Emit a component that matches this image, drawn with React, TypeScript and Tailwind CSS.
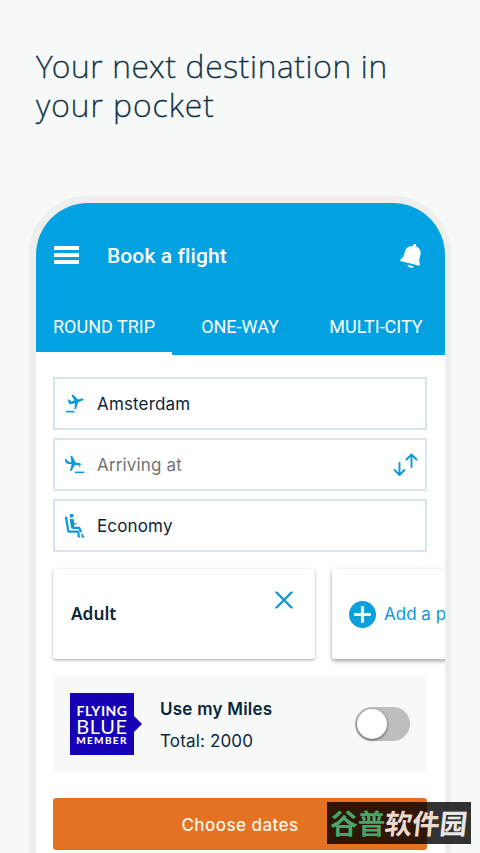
import React from "react";

const INTER = "font-['Inter','Liberation_Sans',sans-serif]";
const ROBOTO = "font-['Roboto','Liberation_Sans',sans-serif]";

function Takeoff() {
  return (
    <svg width="22" height="22" viewBox="0 0 22 22" className="shrink-0" fill="#0d98d8">
      <path d="M2 17.8h8.4v1.6H2z" />
      <path d="M3.6 6.4 5 6.5 7.4 8.5 10.4 7.6 7.3 2.3 9.1 1.6 14 6.6 17.8 5.6C19.8 5.2 20.2 6.8 18.7 7.6L14.2 9.2 12 16 10.4 16.3 11 10.2 5.8 11.2 4.9 10.3Z" />
    </svg>
  );
}

function Landing() {
  return (
    <svg width="22" height="22" viewBox="0 0 22 22" className="shrink-0" fill="#0d98d8">
      <path d="M11 17.6h9.3v1.6H11z" />
      <path d="M1 4.8 2.4 5.1 4.1 7.5 7.4 8 6.4 1.8 8.2 2 11.6 8.6 15.3 9.1C17.8 9.5 17.5 11.3 15.6 11.4L11 11 7.4 17 5.8 16.5 7.9 10.4 2.5 9.4 1.5 8.2Z" />
      <path d="M15 11.5 16.6 12.4 15 13Z" />
    </svg>
  );
}

function Seat() {
  return (
    <svg width="22" height="25" viewBox="0 0 22 25" className="shrink-0" fill="none" stroke="#0d98d8">
      <circle cx="7.6" cy="2.8" r="2" fill="#0d98d8" stroke="none" />
      <path d="M1.9 3.8 4.4 18.6H14.2L15 24.4" strokeWidth="2.2" strokeLinejoin="round" />
      <path d="M8.5 14.9H15.2L17.2 19" strokeWidth="2.2" strokeLinejoin="round" />
      <path d="M5.6 6.6Q7.6 5 9.9 6.6L10.4 15.4H7.3z" fill="#0d98d8" stroke="none" />
      <path d="M9.6 10.7h2.8" strokeWidth="1.4" />
      <path d="M17.6 19.5 20.8 24.4H17.4z" fill="#0d98d8" stroke="none" />
    </svg>
  );
}

function Field({ icon, children }: { icon: React.ReactNode; children: React.ReactNode }) {
  return (
    <div className="flex h-[53px] items-center border-2 border-[#d5e5eb] bg-white pl-[9px] pr-[7px]">
      {icon}
      {children}
    </div>
  );
}

export default function App() {
  return (
    <div className="flex h-[853px] w-[480px] flex-col overflow-hidden bg-[#f7f9f9] text-[#0b2638]">
      <h1 className="h-[196px] shrink-0 whitespace-nowrap pl-[36px] pt-[46px] font-['Noto_Sans','Open_Sans',sans-serif] text-[32px] font-extralight leading-[39px] text-[#0b2f43] [-webkit-text-stroke:0.45px_#0b2f43]">
        <span className="block tracking-[0.7px]">Your next destination in</span>
        <span className="block tracking-[1px]">your pocket</span>
      </h1>

      <div className="relative ml-[29px] h-[657px] w-[422px] shrink-0 rounded-t-[58px] bg-[#eeeeed] pl-[7px] pr-[6.5px] pt-[7px]">
        <div className="h-full overflow-hidden rounded-t-[52px] bg-white">
          <header className={`flex h-[152px] flex-col bg-[#02a1e2] text-white ${ROBOTO}`}>
            <div className="flex h-[105px] items-center pl-[18px] pr-[21px]">
              <div className="mb-px flex w-[25px] flex-col gap-[3px]">
                <i className="block h-[4px] bg-white" />
                <i className="block h-[4px] bg-white" />
                <i className="block h-[4px] bg-white" />
              </div>
              <span className="ml-[28px] flex-1 text-[21px] font-medium leading-6 tracking-[0.1px]">Book a flight</span>
              <svg width="24" height="26" viewBox="0 0 24 26" fill="#fff" className="mr-px">
                <path d="M16.1 1C14.9.7 14.3 1.4 14 2.7C9.9 2.9 6.7 5 5.7 9C4.8 12.6 4.5 14.4 1.8 16.2C1.2 16.7 1 17.7 1.2 18L20.3 22.7C21 22.2 21.1 21 20.7 20.4C19.8 17.8 20.6 15 21.4 11.7C22.3 7.8 20.3 4.7 17 3.3C17.2 2.3 16.9 1.3 16.1 1Z" />
                <path d="M8.5 21.8 15 23.4C14.1 25.5 9.1 25 8.5 21.8Z" />
              </svg>
            </div>
            <nav className="flex flex-1 text-[18px] leading-[38px]">
              <div className="flex h-[47px] w-[136px] justify-center border-b-[3px] border-white">ROUND TRIP</div>
              <div className="flex w-[136px] justify-center">ONE-WAY</div>
              <div className="flex w-[136px] justify-center">MULTI-CITY</div>
            </nav>
          </header>

          <main className={`flex w-[409px] flex-col pl-[17px] pt-[22px] ${INTER}`}>
            <div className="flex w-[374px] flex-col gap-[8px] text-[17px] tracking-[0.15px]">
              <Field icon={<Takeoff />}>
                <span className="ml-[11px] pt-[2px]">Amsterdam</span>
              </Field>
              <Field icon={<Landing />}>
                <span className="ml-[11px] flex-1 pt-[2px] text-[#707273]">Arriving at</span>
                <svg width="25" height="24" viewBox="0 0 25 24" fill="none" stroke="#0d98d8" strokeWidth="1.9" strokeLinecap="round" strokeLinejoin="round">
                  <path d="M6.5 10v12M1.5 17l5 5 5-5M18.5 14V1.5M13.5 6.5l5-5 5 5" />
                </svg>
              </Field>
              <Field icon={<Seat />}>
                <span className="ml-[11px] pt-[2px]">Economy</span>
              </Field>
            </div>

            <div className="mt-[17px] flex gap-[17px]">
              <section className="flex h-[90px] w-[262px] shrink-0 items-center rounded-[3px] bg-white pl-[18px] pr-[21px] shadow-[0_1px_3px_rgba(0,0,0,0.35)]">
                <strong className="flex-1 font-['Noto_Sans',sans-serif] text-[17.3px] font-semibold">Adult</strong>
                <svg className="mb-[28px]" width="20" height="20" viewBox="0 0 20 20" stroke="#0d98d8" strokeWidth="2.4" strokeLinecap="round">
                  <path d="m2.5 2.5 15 15M17.5 2.5l-15 15" />
                </svg>
              </section>
              <section className="flex h-[90px] w-[200px] shrink-0 items-center whitespace-nowrap rounded-[3px] bg-white pl-[17px] text-[#0d98d8] shadow-[0_2px_4px_rgba(0,0,0,0.38)]">
                <svg width="27" height="27" viewBox="0 0 26 26">
                  <circle cx="13" cy="13" r="13" fill="#0d9edc" />
                  <path d="M13 5v16M5 13h16" stroke="#fff" strokeWidth="3" />
                </svg>
                <span className="ml-[8px] pt-px text-[17px]">Add a passenger</span>
              </section>
            </div>

            <section className="mt-[17px] flex h-[97px] w-[374px] items-center bg-[#f7f9f9] pb-px pl-[17px] pr-[17px]">
              <div className="flex items-center">
                <div className="flex h-[62px] w-[64px] flex-col items-center bg-[#1500b5] pt-[10px] font-['Lato',sans-serif] text-white">
                  <span className="text-[14px] font-bold leading-[15px] tracking-[0.5px]">FLYING</span>
                  <span className="text-[20px] leading-[16px] tracking-[0.7px]">BLUE</span>
                  <span className="text-[10px] font-black leading-[12px] tracking-[1.3px]">MEMBER</span>
                </div>
                <svg width="8" height="16" viewBox="0 0 8 16" fill="#1500b5">
                  <path d="M0 0 8 8 0 16Z" />
                </svg>
              </div>
              <div className="ml-[18px] flex flex-1 flex-col pt-px text-[17px] leading-[32px]">
                <strong className="font-semibold tracking-[0.25px]">Use my Miles</strong>
                <span className="tracking-[0.15px]">Total: 2000</span>
              </div>
              <div className="flex h-[34px] w-[55px] items-center rounded-full bg-[#bcbdbd] pl-[1.5px]">
                <div className="size-[30px] rounded-full bg-white shadow-[0_1px_3px_rgba(0,0,0,0.6)]" />
              </div>
            </section>

            <button className="mt-[25px] h-[52px] w-[374px] rounded-[3px] bg-[#e37222] pt-[3px] text-[17px] font-medium tracking-[0.45px] text-[#fff5e8]">
              Choose dates
            </button>
          </main>
        </div>

        <div className="absolute left-[298px] top-[606px] flex h-[42px] w-[144px] items-center justify-center whitespace-nowrap bg-black/80 font-['Noto_Sans_CJK_SC',sans-serif] text-[27.5px] font-bold leading-[40px]">
          <span className="pb-[2px] text-[#4ba568]">谷普</span>
          <span className="-skew-x-6 pb-[2px] text-[#edd9ce]">软件</span>
          <span className="-skew-x-6 pb-[2px] text-[#e9e9e9]">园</span>
        </div>
      </div>
    </div>
  );
}
